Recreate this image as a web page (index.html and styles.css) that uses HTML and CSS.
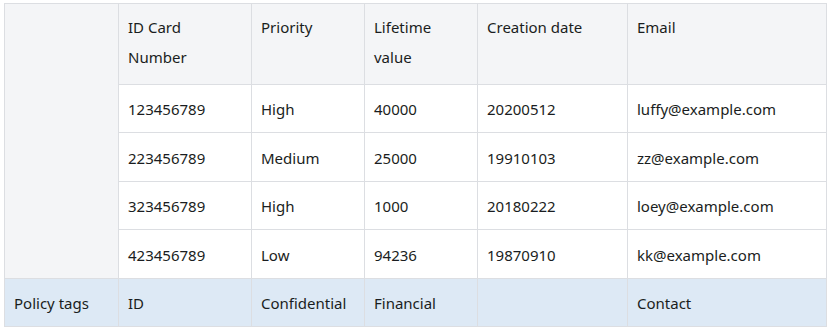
FILE: index.html
```html
<!DOCTYPE html>
<html>
<head>
<meta charset="utf-8">
<link rel="stylesheet" href="styles.css">
</head>
<body>
<div class="wrap">
<table class="grid">
  <colgroup>
    <col class="c0"><col class="c1"><col class="c2"><col class="c3"><col class="c4"><col class="c5">
  </colgroup>
  <tbody>
    <tr class="head">
      <td class="side" rowspan="5"></td>
      <th>ID Card<br>Number</th>
      <th>Priority</th>
      <th>Lifetime<br>value</th>
      <th>Creation date</th>
      <th>Email</th>
    </tr>
    <tr class="row"><td>123456789</td><td>High</td><td>40000</td><td>20200512</td><td>luffy@example.com</td></tr>
    <tr class="row"><td>223456789</td><td>Medium</td><td>25000</td><td>19910103</td><td>zz@example.com</td></tr>
    <tr class="row"><td>323456789</td><td>High</td><td>1000</td><td>20180222</td><td>loey@example.com</td></tr>
    <tr class="row"><td>423456789</td><td>Low</td><td>94236</td><td>19870910</td><td>kk@example.com</td></tr>
    <tr class="tags"><td>Policy tags</td><td>ID</td><td>Confidential</td><td>Financial</td><td></td><td>Contact</td></tr>
  </tbody>
</table>
</div>
</body>
</html>
```
FILE: styles.css
```css
html, body {
  margin: 0;
  padding: 0;
  background: #ffffff;
}
.wrap {
  padding: 3px 0 0 4px;
}
.grid {
  border-collapse: collapse;
  table-layout: fixed;
  width: 822px;
  font-family: "Noto Sans", "Open Sans", sans-serif;
  font-size: 15px;
  color: #1a1d21;
  line-height: 30px;
}
.c0 { width: 114px; }
.c1 { width: 133px; }
.c2 { width: 113px; }
.c3 { width: 113px; }
.c4 { width: 150px; }
.c5 { width: 199px; }
.grid th, .grid td {
  border: 1px solid #dcdee2;
  padding: 9.5px 9px 8px 9px;
  text-align: left;
  vertical-align: top;
  font-weight: normal;
}
.head th {
  background: #f4f5f7;
  padding-top: 7.5px;
  padding-bottom: 12px;
}
.grid td.side {
  background: #f4f5f7;
}
.tags td {
  background: #dde9f5;
}
```
